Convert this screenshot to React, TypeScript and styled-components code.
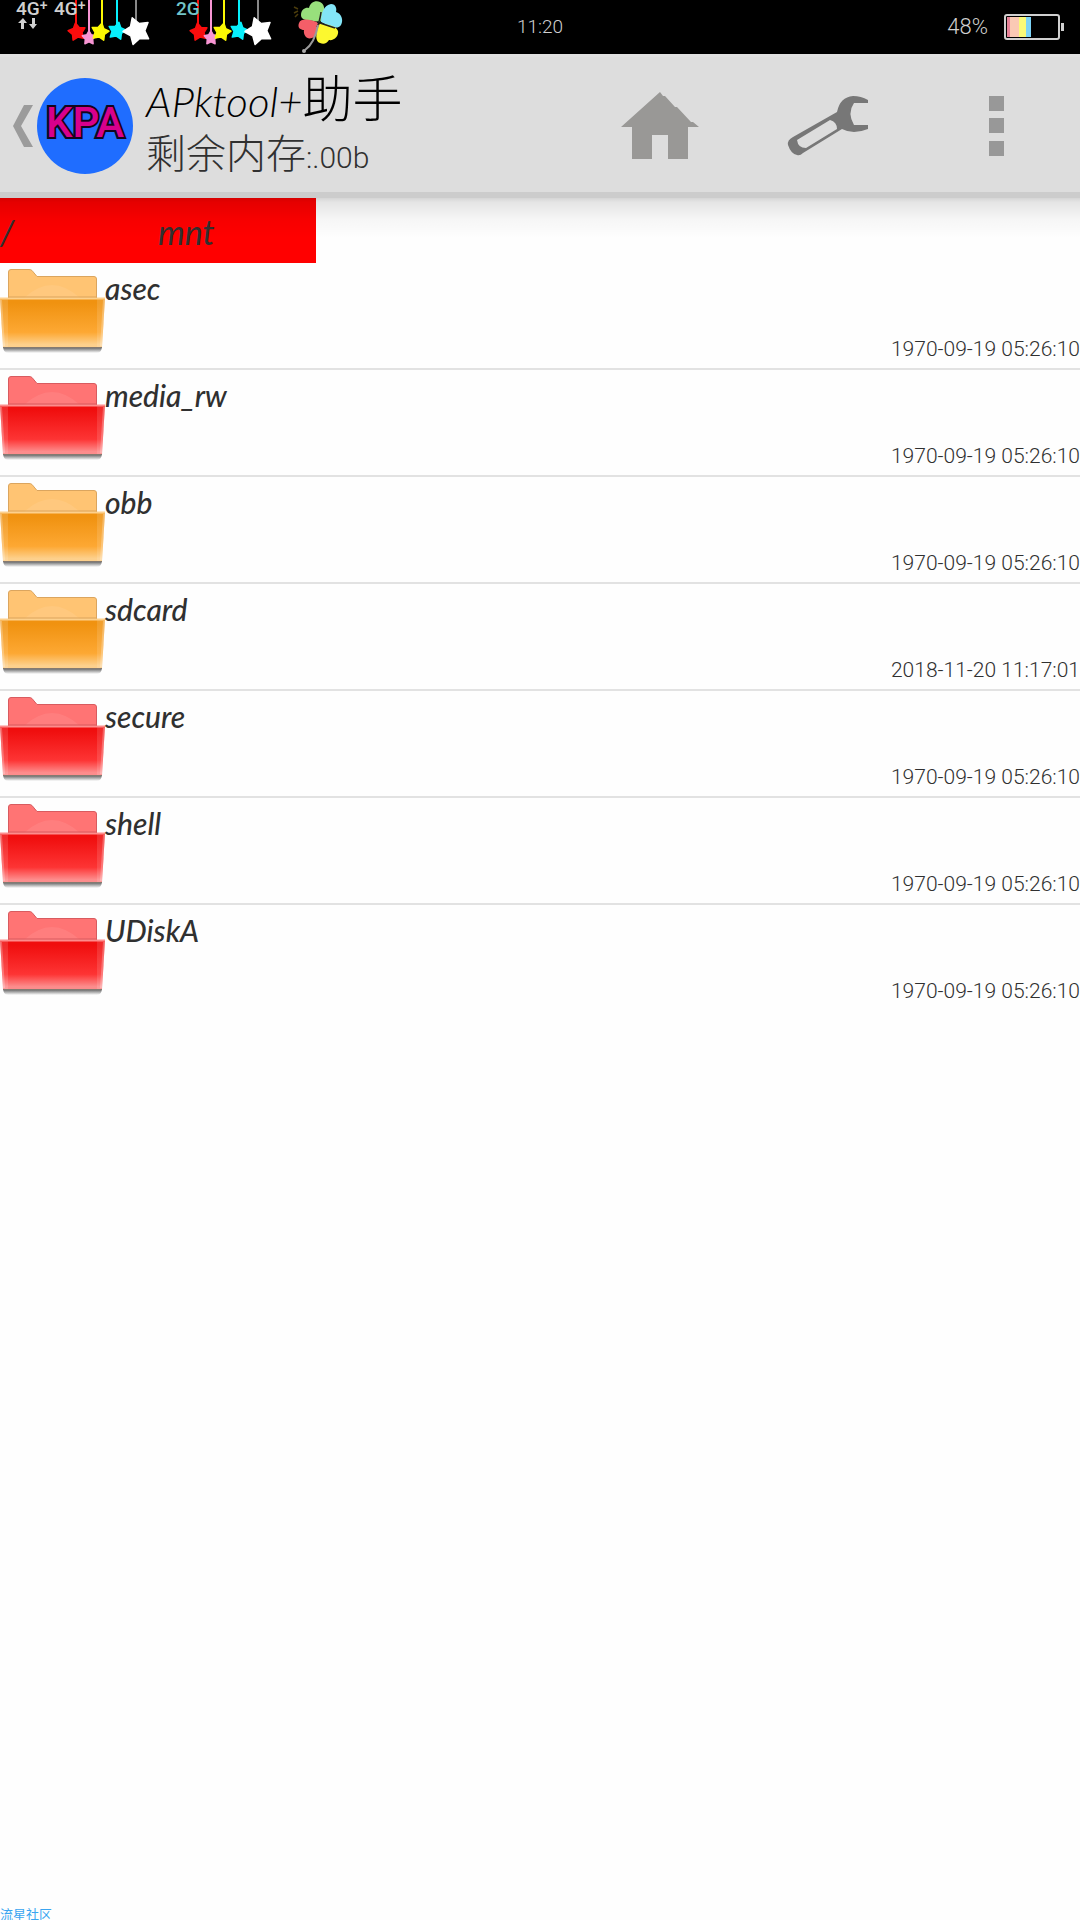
import React from "react";
import styled, { createGlobalStyle } from "styled-components";

const thin = `Roboto, "Liberation Sans", "Noto Sans CJK SC", sans-serif`;
const script = `Lato, "Liberation Sans", "Noto Sans CJK SC", sans-serif`;

const GlobalStyle = createGlobalStyle`
  * { box-sizing: border-box; }
  body { margin: 0; background: #fefefe; }
  button { border: 0; padding: 0; margin: 0; background: none; font: inherit; color: inherit; cursor: pointer; text-align: left; }
  svg { display: block; flex: none; }
`;

const Page = styled.div`
  min-height: 100vh;
  display: flex;
  flex-direction: column;
  background: #fefefe;
  color: #303030;
  font-family: ${thin};
`;

const StatusBar = styled.div`
  height: 54px;
  display: grid;
  grid-template-columns: 1fr auto 1fr;
  align-items: center;
  background: #000;
  color: #d0d0d0;
  font-size: 22px;
  font-weight: 300;
  line-height: 48px;
`;

const Clock = styled.time`
  font-size: 19px;
`;

const Signals = styled.div`
  display: flex;
  align-self: start;
  padding-left: 16px;
`;

const Network = styled.div`
  width: 38px;
`;

const NetLabel = styled.span<{ $color?: string }>`
  display: block;
  color: ${(p) => p.$color || "#d0d0d0"};
  font: 500 19px/18px Roboto, sans-serif;
  white-space: nowrap;
  sup { font-size: 14px; line-height: 1px; vertical-align: 5px; }
`;

const Charm = styled.div<{ $width: number }>`
  position: relative;
  width: ${(p) => p.$width}px;
`;

const CharmLabel = styled.div`
  position: absolute;
  top: 0;
  left: 0;
`;

const Power = styled.div`
  display: flex;
  justify-content: flex-end;
  align-items: center;
  gap: 16px;
  padding-right: 16px;
`;

const Header = styled.header`
  position: relative;
  height: 144px;
  display: flex;
  align-items: center;
  background: #ddd;
  padding-top: 3px;
  border-top: 3px solid #e0e0e0;
  border-bottom: 6px solid #ccc;
  &::after {
    content: "";
    position: absolute;
    top: 141px;
    left: 0;
    right: 0;
    height: 40px;
    pointer-events: none;
    background: linear-gradient(rgba(0, 0, 0, 0.16), rgba(0, 0, 0, 0.1) 4px, rgba(0, 0, 0, 0.03) 22px, transparent);
  }
`;

const Brand = styled.button`
  flex: 1;
  display: flex;
  align-items: center;
  padding-left: 13px;
  gap: 4px;
`;

const Logo = styled.span`
  width: 96px;
  height: 96px;
  border-radius: 50%;
  background: #1f6dff;
  display: flex;
  align-items: center;
  justify-content: center;
  padding-bottom: 6px;
  color: #d8008c;
  font: 500 42px/48px Roboto, sans-serif;
  -webkit-text-stroke: 4px #14051c;
  paint-order: stroke fill;
`;

const Titles = styled.span`
  display: flex;
  flex-direction: column;
  padding-left: 9px;
  font-weight: 300;
  white-space: nowrap;
`;

const Title = styled.span`
  display: flex;
  align-items: baseline;
  color: #000;
  font: italic 300 42px/52px ${script};
`;

const Subtitle = styled.span`
  display: flex;
  align-items: baseline;
  font-size: 30px;
  line-height: 48px;
`;

const Han = styled.span<{ $size: number }>`
  font: normal 300 ${(p) => p.$size}px/48px "Noto Sans CJK SC", sans-serif;
`;

const Action = styled.button`
  width: 168px;
  height: 132px;
  display: flex;
  align-items: center;
  justify-content: center;
`;

const Crumbs = styled.nav`
  display: flex;
  height: 65px;
`;

const Crumb = styled.button`
  width: 158px;
  padding-top: 2px;
  background: #f00;
  font: italic 400 34px/63px ${script};
`;

const Files = styled.ul`
  list-style: none;
  margin: 0;
  padding: 0;
`;

const FileItem = styled.li`
  & + & { border-top: 2px solid #e2e2e2; }
`;

const FileButton = styled.button`
  width: 100%;
  height: 105px;
  display: flex;
`;

const FileInfo = styled.span`
  flex: 1;
  display: flex;
  flex-direction: column;
  justify-content: space-between;
`;

const FileName = styled.span`
  padding-top: 7px;
  font: italic 500 30px/37px ${script};
`;

const FileDate = styled.time`
  align-self: flex-end;
  font-size: 21px;
  font-weight: 300;
  line-height: 38px;
`;

const Watermark = styled.footer`
  margin-top: auto;
  color: #3aa5f0;
  font: 13px/13px "Noto Sans CJK SC", sans-serif;
`;

function star(cx: number, cy: number, r: number, turn: number) {
  return Array.from({ length: 10 }, (_, i) => {
    const a = ((i * 36 - 90 + turn) * Math.PI) / 180;
    const q = i % 2 ? r * 0.56 : r;
    return `${(cx + q * Math.cos(a)).toFixed(1)},${(cy + q * Math.sin(a)).toFixed(1)}`;
  }).join(" ");
}

const STARS = [
  { x: 22, cx: 23, cy: 32, r: 9, turn: -10, color: "#fb0d0d" },
  { x: 35, cx: 35, cy: 38, r: 7, turn: 0, color: "#f896d4" },
  { x: 48, cx: 46, cy: 32, r: 9, turn: 12, color: "#fcf903" },
  { x: 63, cx: 63, cy: 31, r: 9, turn: 12, color: "#08f0fc" },
  { x: 82, cx: 83, cy: 31, r: 14, turn: -20, color: "#fff" },
];

function StarCharm() {
  return (
    <svg width="98" height="50" viewBox="0 0 98 50" aria-hidden="true">
      {STARS.map((s) => (
        <g key={s.color}>
          <path d={`M${s.x} 0V${s.cy - 4}`} stroke={s.r > 10 ? "#888" : s.color} strokeWidth="2" />
          <polygon points={star(s.cx, s.cy, s.r, s.turn)} fill={s.color} stroke={s.color} strokeWidth="1.5" strokeLinejoin="round" />
        </g>
      ))}
    </svg>
  );
}

function Clover() {
  return (
    <svg width="52" height="54" viewBox="0 0 52 54" aria-hidden="true">
      <path d="M1 7l4 2M1 13l4-2M2 17l3-3" stroke="#4b3c0c" strokeWidth="1.5" />
      <path d="M27 22C19 20 8 22 8 15C8 9 13 7 16 8C17 3 22 0 27 2C34 5 31 16 27 22Z" fill="#98e07c" />
      <path d="M28 22C28 13 31 5 38 4C43 4 44 9 43 12C48 13 51 20 48 25C44 31 34 25 28 22Z" fill="#83e5f7" />
      <path d="M26 23C17 19 8 18 6 23C4 28 8 30 11 30C10 35 14 40 19 38C25 36 26 28 26 23Z" fill="#f45e68" />
      <path d="M27 23C22 33 22 42 27 43C31 45 34 43 36 40C41 41 46 36 45 31C43 25 33 25 27 23Z" fill="#fcf82f" />
      <path d="M28 12C27 20 26 23 24 27M24 22L42 28" fill="none" stroke="#222" strokeWidth="1.5" />
      <path d="M25 25C23 36 19 45 12 50" fill="none" stroke="#999" strokeWidth="2" />
      <circle cx="11" cy="51" r="2" fill="#aaa" />
    </svg>
  );
}

function Battery() {
  return (
    <svg width="60" height="26" viewBox="0 0 60 26" aria-hidden="true">
      <rect x="1" y="1" width="54" height="24" rx="2" fill="none" stroke="#d0d0d0" strokeWidth="2" />
      <rect x="57" y="9" width="3" height="8" fill="#d0d0d0" />
      <rect x="3" y="3" width="3" height="20" fill="#e68297" />
      <rect x="6" y="3" width="9" height="20" fill="#fac9b4" />
      <rect x="15" y="3" width="7" height="20" fill="#fafa78" />
      <rect x="22" y="3" width="5" height="20" fill="#7dd3f7" />
    </svg>
  );
}

const PALETTE = {
  orange: { back: "#ffc473", edge: "#dba55e", top: "#f09210", mid: "#fda833", low: "#fdd08c" },
  red: { back: "#ff7474", edge: "#d85b5f", top: "#f00e0e", mid: "#fd3434", low: "#fd8c8c" },
};
type Tone = keyof typeof PALETTE;

function Folder({ tone, id }: { tone: Tone; id: string }) {
  const c = PALETTE[tone];
  return (
    <svg width="105" height="105" viewBox="0 0 105 105" aria-hidden="true">
      <defs>
        <linearGradient id={id} x1="0" y1="0" x2="0" y2="1">
          <stop offset="0" stopColor={c.top} />
          <stop offset="0.1" stopColor={c.top} />
          <stop offset="0.7" stopColor={c.mid} />
          <stop offset="0.95" stopColor={c.low} />
        </linearGradient>
        <linearGradient id={id + "s"} x1="0" y1="0" x2="0" y2="1">
          <stop offset="0.4" stopColor="#777" />
          <stop offset="1" stopColor="#777" stopOpacity="0" />
        </linearGradient>
      </defs>
      <path d="M8.500 36V9Q8.500 6.500 11 6.500H29Q31 6.500 32 7.500L37 13.500H94Q96.500 13.500 96.500 16V36Z" fill={c.back} stroke={c.edge} />
      <path d="M24 35Q52 9 80 35Z" fill="#fff" opacity="0.08" />
      <path d="M3 82H102Q102 90 97 90H8Q3 90 3 82Z" fill={`url(#${id}s)`} />
      <path d="M0 35H105L102 84H3Z" fill={`url(#${id})`} />
      <path d="M0 35H8V84H3ZM105 35H97V84H102Z" fill="#fff" opacity="0.12" />
      <path d="M1 37L4 83M104 37L101 83" stroke="#fff" strokeWidth="2" opacity="0.25" />
      <path d="M0 35.500H105" stroke={c.low} strokeWidth="2" />
      <path d="M8 34H97" stroke={c.edge} strokeWidth="1" />
      <path d="M3 84.500H102" stroke="#857a70" strokeWidth="1" />
    </svg>
  );
}

const FILES: { name: string; tone: Tone; date: string }[] = [
  { name: "asec", tone: "orange", date: "1970-09-19 05:26:10" },
  { name: "media_rw", tone: "red", date: "1970-09-19 05:26:10" },
  { name: "obb", tone: "orange", date: "1970-09-19 05:26:10" },
  { name: "sdcard", tone: "orange", date: "2018-11-20 11:17:01" },
  { name: "secure", tone: "red", date: "1970-09-19 05:26:10" },
  { name: "shell", tone: "red", date: "1970-09-19 05:26:10" },
  { name: "UDiskA", tone: "red", date: "1970-09-19 05:26:10" },
];

export default function App() {
  return (
    <Page>
      <GlobalStyle />
      <StatusBar>
        <Signals>
          <Network>
            <NetLabel>4G<sup>+</sup></NetLabel>
            <svg width="22" height="12" viewBox="0 0 22 12" aria-hidden="true">
              <path d="M7 0L11 5H8V11H5V5H2ZM17 11L13 6H16V0H19V6H21Z" fill="#d0d0d0" />
            </svg>
          </Network>
          <Charm $width={122}>
            <StarCharm />
            <CharmLabel><NetLabel>4G<sup>+</sup></NetLabel></CharmLabel>
          </Charm>
          <Charm $width={117}>
            <StarCharm />
            <CharmLabel><NetLabel $color="#72c4c8">2G</NetLabel></CharmLabel>
          </Charm>
          <Clover />
        </Signals>
        <Clock>11:20</Clock>
        <Power>
          <span>48%</span>
          <Battery />
        </Power>
      </StatusBar>
      <Header>
        <Brand type="button">
          <svg width="20" height="42" viewBox="0 0 20 42" aria-hidden="true">
            <path d="M11 0H20L8 21L20 42H11L0 21Z" fill="#9b9b9b" />
          </svg>
          <Logo>KPA</Logo>
          <Titles>
            <Title>APktool+<Han $size={50}>助手</Han></Title>
            <Subtitle><Han $size={40}>剩余内存</Han>:.00b</Subtitle>
          </Titles>
        </Brand>
        <Action type="button" aria-label="Home">
          <svg width="78" height="68" viewBox="0 0 78 68" aria-hidden="true">
            <path d="M39 0L0 35H11V67H31V43H47V67H67V35H78L72 30H70L56 15H54L44 4H42Z" fill="#999896" />
          </svg>
        </Action>
        <Action type="button" aria-label="Tools">
          <svg width="82" height="62" viewBox="0 0 82 62" aria-hidden="true">
            <path fillRule="evenodd" d="M81 5Q74 1 66 1Q53 2 50 17L6 42Q0 45 1 50Q4 59 10 60Q13 61 16 58L55 34Q66 40 81 34V30H67Q60 18 67 8H81ZM43 25Q50 27 50 34L19 53Q11 53 10 45Z" fill="#777" />
          </svg>
        </Action>
        <Action type="button" aria-label="More">
          <svg width="15" height="60" viewBox="0 0 15 60" aria-hidden="true">
            <path d="M0 0H15V15H0ZM0 22H15V37H0ZM0 45H15V60H0Z" fill="#989898" />
          </svg>
        </Action>
      </Header>
      <Crumbs>
        <Crumb type="button">/</Crumb>
        <Crumb type="button">mnt</Crumb>
      </Crumbs>
      <Files>
        {FILES.map((f) => (
          <FileItem key={f.name}>
            <FileButton type="button">
              <Folder tone={f.tone} id={`folder-${f.name}`} />
              <FileInfo>
                <FileName>{f.name}</FileName>
                <FileDate>{f.date}</FileDate>
              </FileInfo>
            </FileButton>
          </FileItem>
        ))}
      </Files>
      <Watermark>流星社区</Watermark>
    </Page>
  );
}
